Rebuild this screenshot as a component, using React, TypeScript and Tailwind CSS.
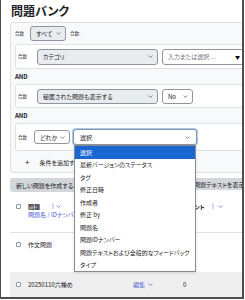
import clsx from "clsx";

const Chevron = ({ className = "" }: { className?: string }) => (
  <svg width="5" height="3" viewBox="0 0 5 3" className={className}>
    <path d="M0.6 0.5L2.5 2.4L4.4 0.5" fill="none" stroke="currentColor" strokeWidth="0.7" />
  </svg>
);

const Kebab = () => (
  <svg width="2" height="6" viewBox="0 0 2 6" className="text-[#4b5bd4]">
    <circle cx="1" cy="1" r="0.6" fill="currentColor" />
    <circle cx="1" cy="3" r="0.6" fill="currentColor" />
    <circle cx="1" cy="5" r="0.6" fill="currentColor" />
  </svg>
);

const Checkbox = () => (
  <span className="block h-[5px] w-[5px] rounded-[1px] border border-[#8f959e] bg-white" />
);

function Select({
  label,
  className,
  gray,
  focus,
}: {
  label: string;
  className?: string;
  gray?: boolean;
  focus?: boolean;
}) {
  return (
    <div
      className={clsx(
        "flex shrink-0 items-center justify-between rounded-[3px] border pl-[5px] pr-[4px] text-[6px] whitespace-nowrap",
        gray ? "bg-[#e9ecef] border-[#8f959e]" : "bg-white border-[#8f959e]",
        focus && "border-[#5b8fd9] ring-1 ring-[#a8c8f0]",
        className
      )}
    >
      <span>{label}</span>
      <Chevron className="text-[#495057]" />
    </div>
  );
}

const options = [
  "選択",
  "最新バージョンのステータス",
  "タグ",
  "修正日時",
  "作成者",
  "修正 by",
  "問題名",
  "問題IDナンバー",
  "問題テキストおよび全般的なフィードバック",
  "タイプ",
];

export default function App() {
  return (
    <div className="h-[300px] w-[245px] bg-white">
      <div className="relative h-[299px] w-[244px] overflow-hidden border-b-2 border-l border-r-2 border-[#4f4f4f] font-['Noto_Sans_CJK_JP','Noto_Sans',sans-serif] text-[#1d2125] [font-feature-settings:'palt']">
        <div className="pl-[9px] pt-[3px]">
          <h1 className="h-[16px] pl-[1px] text-[12px] font-bold leading-[16px]">問題バンク</h1>

          {/* Filter panel */}
          <div className="mt-[3px] w-[260px] rounded-[3px] border border-[#dee2e6] bg-[#f8f9fa] px-[4px] pb-[3px] pt-[3px]">
            <div className="flex h-[15px] items-center">
              <span className="w-[15px] shrink-0 text-[4.5px]">合致</span>
              <Select label="すべて" gray className="h-[15px] w-[36px]" />
              <span className="ml-[4px] text-[4.5px]">合致:</span>
            </div>

            <div className="mt-[3px] flex h-[25px] items-center rounded-[3px] border border-[#dee2e6] bg-white pl-[2px]">
              <span className="w-[19px] shrink-0 text-[4.5px]">合致</span>
              <Select label="カテゴリ" gray className="h-[16px] w-[121px]" />
              <div className="ml-[4px] flex h-[16px] w-[82px] shrink-0 items-center justify-between rounded-[3px] border border-[#8f959e] bg-white pl-[5px] pr-[3px] text-[6px]">
                <span className="text-[#6a737b]">入力または選択 ...</span>
                <span className="text-[5px] text-black">▼</span>
              </div>
            </div>

            <div className="flex h-[15px] items-center text-[6px] font-bold">AND</div>

            <div className="flex h-[24px] items-center rounded-[3px] border border-[#dee2e6] bg-white pl-[2px]">
              <span className="w-[19px] shrink-0 text-[4.5px]">合致</span>
              <Select label="秘匿された問題も表示する" gray className="h-[15px] w-[121px]" />
              <Select label="No" className="ml-[4px] h-[15px] w-[31px]" />
            </div>

            <div className="flex h-[15px] items-center text-[6px] font-bold">AND</div>

            <div className="flex h-[28px] items-center rounded-[3px] border border-[#dee2e6] bg-white pl-[2px]">
              <span className="w-[16px] shrink-0 text-[4.5px]">合致</span>
              <Select label="どれか" className="h-[14px] w-[36px]" />
              <Select label="選択" focus className="ml-[3px] h-[16px] w-[124px] pl-[6px] pr-[6px]" />
            </div>

            <div className="mt-[4px] flex h-[14px] items-center pl-[10px] text-[6px]">
              <span className="text-[8px] leading-none">+</span>
              <span className="ml-[10px]">条件を追加する</span>
            </div>
          </div>

          {/* Action bar */}
          <div className="mt-[5px] flex h-[14px] items-start text-[6px]">
            <div className="flex h-[14px] w-[100px] shrink-0 items-center rounded-[3px] bg-[#d3d6da] pl-[6px] whitespace-nowrap">
              新しい問題を作成する...
            </div>
            <div className="ml-[78px] flex h-[12px] w-[80px] shrink-0 items-center rounded-[3px] bg-[#d3d6da] pl-[6px] whitespace-nowrap">
              問題テキストを表示しない
            </div>
          </div>

          {/* Table */}
          <div className="mt-[3px] w-[240px] text-[6px]">
            <div className="flex h-[38px] border-b border-[#dee2e6] pt-[7px]">
              <div className="flex h-[8px] w-[18px] shrink-0 items-center pl-[6px]">
                <Checkbox />
              </div>
              <div className="w-[105px] shrink-0">
                <div className="flex h-[8px] items-center font-bold">
                  問題
                  <span className="ml-[12px]"><Kebab /></span>
                  <Chevron className="ml-[2px] text-[#4b5bd4]" />
                </div>
                <div className="flex h-[9px] items-center whitespace-nowrap text-[#4b5bd4]">問題名 / IDナンバー</div>
              </div>
              <div className="w-[44px] shrink-0 font-bold">アクション</div>
              <div className="flex h-[8px] shrink-0 items-center pl-[6px] font-bold whitespace-nowrap">
                コメント
                <span className="ml-[7px]"><Kebab /></span>
                <Chevron className="ml-[4px] text-[#4b5bd4]" />
              </div>
            </div>

            <div className="flex h-[39px] pt-[7px]">
              <div className="flex h-[8px] w-[18px] shrink-0 items-center pl-[6px]">
                <Checkbox />
              </div>
              <div className="flex h-[8px] items-center">作文問題</div>
            </div>

            <div className="flex h-[25px] items-center bg-[#efefef]">
              <div className="w-[18px] shrink-0 pl-[6px]">
                <Checkbox />
              </div>
              <div className="w-[105px] shrink-0">20250110六種め</div>
              <div className="flex w-[44px] shrink-0 items-center text-[#4b5bd4]">
                編集
                <Chevron className="ml-[3px]" />
              </div>
              <div className="pl-[6px]">0</div>
            </div>
          </div>
        </div>

        {/* Open select list */}
        <div className="absolute left-[73px] top-[145px] w-[122px] border border-[#8a8a8a] bg-white shadow-sm">
          {options.map((o, i) => (
            <div
              key={o}
              className={clsx(
                "flex h-[12.5px] items-center whitespace-nowrap pl-[5px] text-[6px]",
                i === 0 ? "bg-[#1967d2] text-white" : "text-[#1d2125]"
              )}
            >
              {o}
            </div>
          ))}
        </div>
      </div>
    </div>
  );
}
